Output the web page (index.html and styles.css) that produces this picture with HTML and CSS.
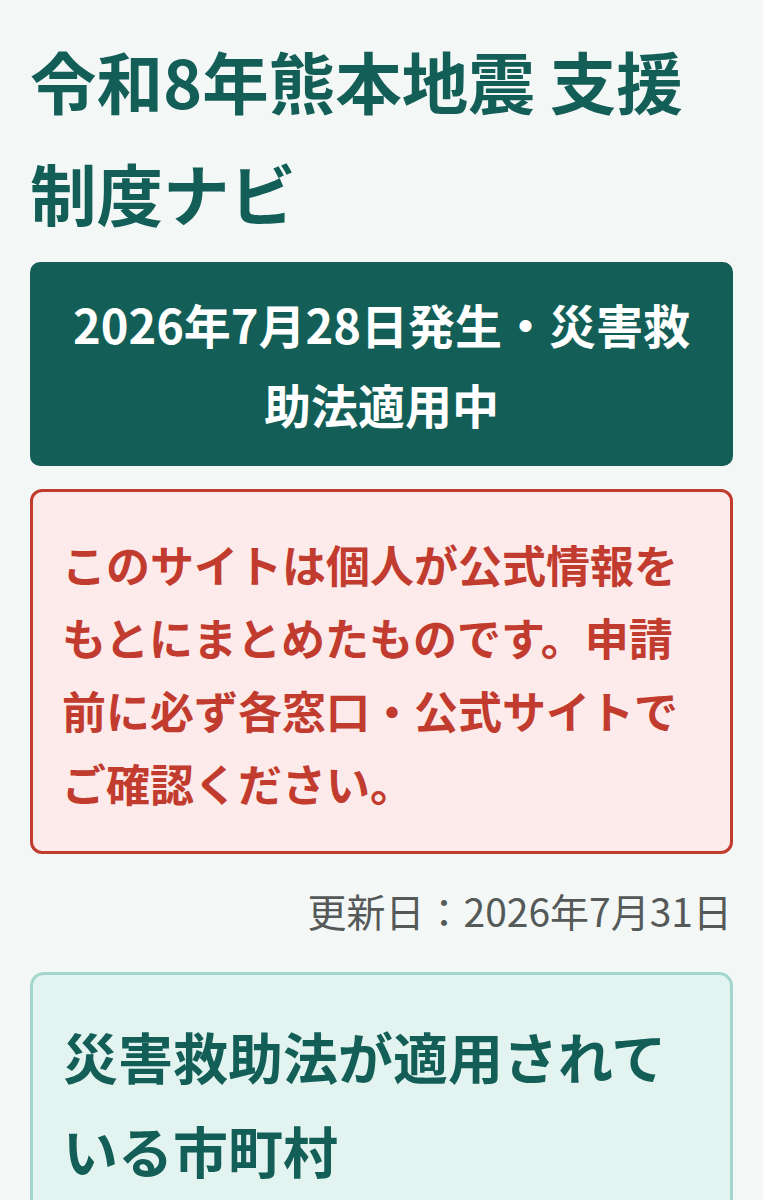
FILE: index.html
```html
<!DOCTYPE html>
<html lang="ja">
<head>
<meta charset="utf-8">
<title>令和8年熊本地震 支援制度ナビ</title>
<link rel="stylesheet" href="styles.css">
</head>
<body>
<main class="page">
  <h1 class="site-title">令和8年熊本地震 支援制度ナビ</h1>
  <div class="status-banner">2026年7月28日発生・災害救助法適用中</div>
  <div class="notice">このサイトは個人が公式情報をもとにまとめたものです。申請前に必ず各窓口・公式サイトでご確認ください。</div>
  <p class="updated">更新日：2026年7月31日</p>
  <section class="card">
    <h2 class="card-title">災害救助法が適用されている市町村</h2>
  </section>
</main>
</body>
</html>
```

FILE: styles.css
```css
html, body {
  margin: 0;
  padding: 0;
}
body {
  background: #f3f8f7;
  font-family: "Noto Sans CJK JP", "Noto Sans", sans-serif;
  color: #1f2d2b;
}
.page {
  padding: 24px 30px 0 30px;
}
.site-title {
  margin: 0 0 14px 0;
  font-size: 66.5px;
  line-height: 112px;
  font-weight: 700;
  color: #135e57;
}
.status-banner {
  background: #135f58;
  color: #ffffff;
  border-radius: 10px;
  padding: 22px 30px;
  font-size: 47px;
  line-height: 80px;
  font-weight: 700;
  text-align: center;
}
.notice {
  margin-top: 23px;
  background: #fdeaea;
  border: 3px solid #c13b2e;
  border-radius: 12px;
  padding: 36px 29px 31px 29px;
  font-size: 44px;
  line-height: 73px;
  font-weight: 700;
  color: #c13b2e;
}
.updated {
  margin: 24px 1px 0 0;
  text-align: right;
  font-size: 39px;
  line-height: 64px;
  color: #555a59;
}
.card {
  margin-top: 30px;
  background: #e3f3f0;
  border: 3px solid #a3d6cc;
  border-radius: 14px;
  padding: 33px 30px 40px 30px;
}
.card-title {
  margin: 0;
  font-size: 55px;
  line-height: 94px;
  font-weight: 700;
  color: #135e57;
}
```
